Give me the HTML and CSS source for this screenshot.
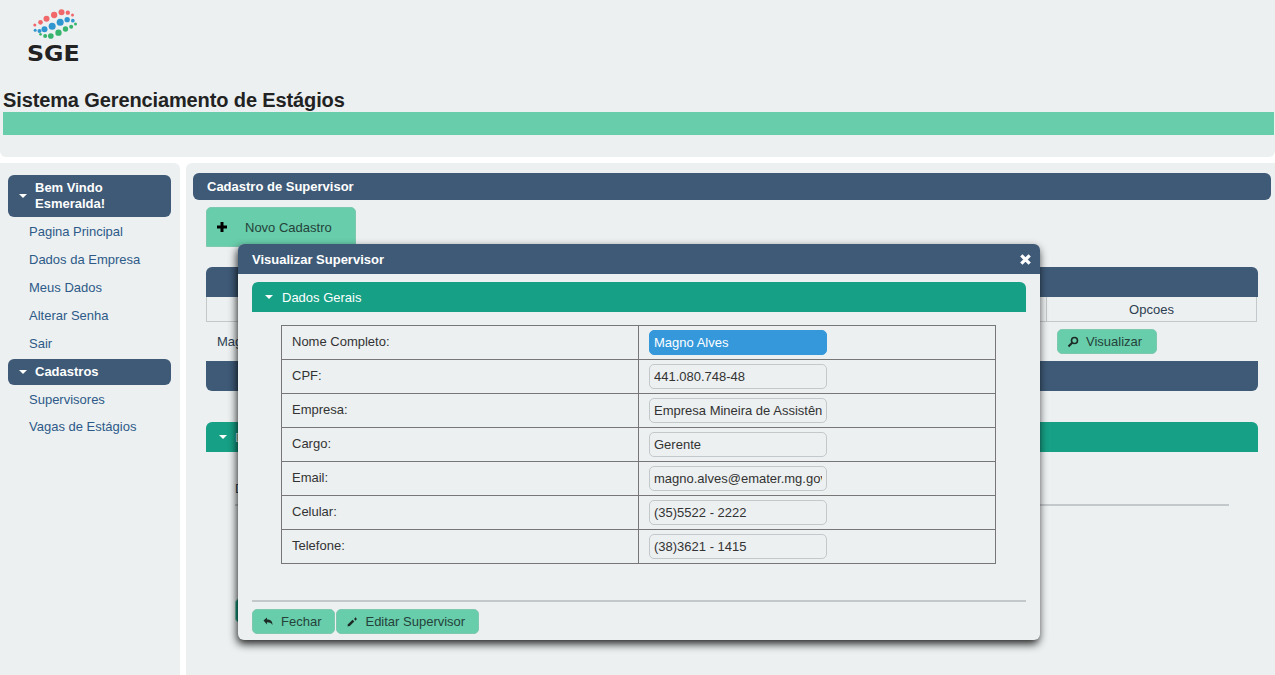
FILE: index.html
```html
<!DOCTYPE html>
<html lang="pt-BR">
<head>
  <meta charset="UTF-8">
  <title>Sistema Gerenciamento de Estágios</title>
  <link rel="stylesheet" href="styles.css">
</head>
<body>
  <header class="top">
    <div class="logo">
      <svg class="logo-dots" viewBox="45 25 140 90" width="47" height="30">
        <g fill="#f0686a">
          <circle cx="56" cy="73" r="4.500"/><circle cx="73" cy="65" r="7"/><circle cx="91" cy="54" r="9"/>
          <circle cx="114" cy="43" r="9.500"/><circle cx="136" cy="35" r="9"/><circle cx="155" cy="36" r="6.500"/><circle cx="169" cy="43" r="4.500"/>
        </g>
        <g fill="#2f96d0">
          <circle cx="57" cy="89" r="4.500"/><circle cx="70" cy="91" r="6"/><circle cx="85" cy="86" r="9"/>
          <circle cx="108" cy="77" r="10.500"/><circle cx="132" cy="65" r="10.500"/><circle cx="153" cy="57" r="8"/><circle cx="170" cy="60" r="5.500"/>
        </g>
        <g fill="#37b56c">
          <circle cx="73" cy="101" r="4"/><circle cx="87" cy="106" r="6"/><circle cx="104" cy="106" r="8.500"/>
          <circle cx="127" cy="96" r="9.500"/><circle cx="148" cy="85" r="8"/><circle cx="165" cy="78" r="6"/><circle cx="178" cy="70" r="4.500"/>
        </g>
      </svg>
      <div class="logo-text">SGE</div>
    </div>
    <h1 class="site-title">Sistema Gerenciamento de Estágios</h1>
    <div class="top-bar"></div>
  </header>

  <div class="main">
    <nav class="sidebar">
      <div class="menu-head">
        <svg class="tri" viewBox="0 0 8 4" width="8" height="4"><path d="M0 0h8L4 4z"/></svg>
        <span>Bem Vindo Esmeralda!</span>
      </div>
      <ul class="menu-list">
        <li>Pagina Principal</li>
        <li>Dados da Empresa</li>
        <li>Meus Dados</li>
        <li>Alterar Senha</li>
        <li>Sair</li>
      </ul>
      <div class="menu-head">
        <svg class="tri" viewBox="0 0 8 4" width="8" height="4"><path d="M0 0h8L4 4z"/></svg>
        <span>Cadastros</span>
      </div>
      <ul class="menu-list menu-tight">
        <li>Supervisores</li>
        <li>Vagas de Estágios</li>
      </ul>
    </nav>

    <section class="content">
      <div class="page-title">Cadastro de Supervisor</div>
      <div class="inner">
        <button class="btn btn-new">
          <svg viewBox="0 0 10 10" width="10" height="10"><path d="M3.500 0h3v3.500H10v3H6.500V10h-3V6.500H0v-3h3.500z"/></svg>
          <span>Novo Cadastro</span>
        </button>

        <div class="grid-head"></div>
        <div class="grid-cols"><div class="col-name"></div><div class="col-opts">Opcoes</div></div>
        <div class="grid-row">
          <span>Magno Alves</span>
          <button class="btn btn-view">
            <svg viewBox="0 0 12 12" width="12" height="12"><circle cx="7.500" cy="4.500" r="3" fill="none" stroke="#1d2b26" stroke-width="1.600"/><path d="M5.200 6.800L1.500 10.500" fill="none" stroke="#1d2b26" stroke-width="2"/></svg>
            <span>Visualizar</span>
          </button>
        </div>
        <div class="grid-foot"></div>

        <div class="green-head">
          <svg class="tri" viewBox="0 0 8 4" width="8" height="4"><path d="M0 0h8L4 4z"/></svg>
          <span>Dados</span>
        </div>
        <div class="green-body">
          <div class="green-label">Dados</div>
          <hr class="line">
          <button class="btn btn-hidden">Voltar</button>
        </div>
      </div>
    </section>
  </div>

  <div class="dialog">
    <div class="dialog-title">
      <span>Visualizar Supervisor</span>
      <svg viewBox="0 0 10 10" width="11" height="11"><path d="M1.200 1.200l7.600 7.600M8.800 1.200l-7.600 7.600" stroke="#fff" stroke-width="3"/></svg>
    </div>
    <div class="dialog-body">
      <div class="dialog-section">
        <svg class="tri" viewBox="0 0 8 4" width="8" height="4"><path d="M0 0h8L4 4z"/></svg>
        <span>Dados Gerais</span>
      </div>
      <table class="form-table">
        <tr><td>Nome Completo:</td><td><input class="field field-focus" value="Magno Alves"></td></tr>
        <tr><td>CPF:</td><td><input class="field" value="441.080.748-48"></td></tr>
        <tr><td>Empresa:</td><td><input class="field" value="Empresa Mineira de Assistência Técnica"></td></tr>
        <tr><td>Cargo:</td><td><input class="field" value="Gerente"></td></tr>
        <tr><td>Email:</td><td><input class="field" value="magno.alves@emater.mg.gov.br"></td></tr>
        <tr><td>Celular:</td><td><input class="field" value="(35)5522 - 2222"></td></tr>
        <tr><td>Telefone:</td><td><input class="field" value="(38)3621 - 1415"></td></tr>
      </table>
      <hr class="dialog-line">
      <div class="dialog-actions">
        <button class="btn btn-small">
          <svg viewBox="0 0 12 12" width="12" height="12"><path d="M1.500 4.500L5 1.500v2c3.500 0 5.500 1.700 5.500 5.500-1-2-3-2.700-5.500-2.700v2.200z" fill="#1d2b26"/></svg>
          <span>Fechar</span>
        </button>
        <button class="btn btn-small">
          <svg viewBox="0 0 12 12" width="12" height="12"><path d="M1.500 10.500l.5-2.300L6.500 3.800l1.800 1.800L3.800 10z" fill="#1d2b26"/><path d="M9 1.500h1v1h1v1h-1v1H9v-1H8v-1h1z" fill="#1d2b26"/></svg>
          <span>Editar Supervisor</span>
        </button>
      </div>
    </div>
  </div>
</body>
</html>
```

FILE: styles.css
```css
html, body {
  height: 100%;
}
body {
  margin: 0;
  background-color: #fff;
  font-family: "Liberation Sans", Arial, sans-serif;
  font-size: 13px;
  color: #2c3e50;
  display: flex;
  flex-direction: column;
  overflow: hidden;
}

/* Topo */
.top {
  height: 157px;
  flex: none;
  box-sizing: border-box;
  background-color: #ecf0f1;
  border-radius: 0 0 6px 6px;
  padding: 9px 1px 0 3px;
}
.logo {
  width: 56px;
  height: 70px;
  margin-left: 24px;
}
.logo-dots {
  display: block;
  margin-left: 4px;
}
.logo-text {
  font-family: "DejaVu Sans", sans-serif;
  font-weight: bold;
  font-size: 21px;
  line-height: 23px;
  color: #222;
  margin-top: 4px;
  transform: scaleX(1.13);
  transform-origin: left;
}
.site-title {
  margin: 10px 0 0;
  font-size: 20px;
  line-height: 23px;
  letter-spacing: -0.12px;
  color: #222;
}
.top-bar {
  height: 23px;
  background-color: #68cdaa;
}

.main {
  flex: 1;
  display: flex;
  gap: 6px;
  margin-top: 6px;
  min-height: 0;
}

/* Menu lateral */
.sidebar {
  width: 180px;
  flex: none;
  box-sizing: border-box;
  background-color: #ecf0f1;
  border-radius: 0 6px 0 0;
  padding: 12px 9px 0 8px;
}
.tri {
  fill: #fff;
  flex: none;
}
.menu-head {
  display: flex;
  align-items: center;
  gap: 8px;
  padding: 5px 8px 5px 11px;
  background-color: #3e5a77;
  border-radius: 6px;
  color: #fff;
  font-weight: bold;
  line-height: 16px;
}
.menu-list {
  list-style-type: none;
  margin: 0 0 2px;
  padding: 0 0 0 21px;
  color: #2d5a88;
}
.menu-list li {
  height: 28px;
  line-height: 30px;
}
.menu-tight li + li {
  margin-top: -1px;
}

/* Conteudo */
.content {
  flex: 1;
  box-sizing: border-box;
  background-color: #ecf0f1;
  border-radius: 6px 0 0 0;
  padding: 10px 4px 0 7px;
}
.page-title {
  height: 27px;
  line-height: 28px;
  padding-left: 14px;
  background-color: #3e5a77;
  border-radius: 6px;
  color: #fff;
  font-weight: bold;
}
.inner {
  padding: 7px 13px 0;
}
.btn {
  display: flex;
  align-items: center;
  font-family: inherit;
  font-size: 13px;
  color: #24423a;
  background-color: #68cdaa;
  border: 1px solid #7cc9b0;
  border-radius: 5px;
  padding: 0;
}
.btn-new {
  width: 150px;
  height: 40px;
  padding-left: 10px;
  gap: 18px;
  border-radius: 5px 5px 0 0;
}
.grid-head {
  height: 30px;
  margin-top: 20px;
  background-color: #3e5a77;
  border-radius: 6px 6px 0 0;
}
.grid-cols {
  display: flex;
  height: 24px;
  border: 1px solid #c3c8ca;
  border-top: none;
  margin-right: 1px;
}
.col-name {
  flex: 1;
  border-right: 1px solid #c3c8ca;
}
.col-opts {
  width: 209px;
  text-align: center;
  line-height: 26px;
}
.grid-row {
  display: flex;
  align-items: center;
  justify-content: space-between;
  height: 39px;
  padding: 0 101px 0 11px;
}
.btn-view {
  width: 100px;
  height: 25px;
  padding-left: 9px;
  gap: 7px;
}
.grid-foot {
  height: 30px;
  background-color: #3e5a77;
  border-radius: 0 0 6px 6px;
}
.green-head {
  display: flex;
  align-items: center;
  gap: 8px;
  height: 30px;
  margin-top: 31px;
  padding-left: 13px;
  background-color: #16a085;
  border-radius: 6px 6px 0 0;
  color: #fff;
}
.green-body {
  padding: 29px 29px 0;
}
.green-label {
  line-height: 16px;
}
.line {
  height: 2px;
  margin: 7px 0 0;
  border: none;
  background-color: #c3c8ca;
}
.btn-hidden {
  width: 90px;
  height: 25px;
  margin-top: 92px;
  padding-left: 10px;
  background-color: #16a085;
}

/* Janela de visualizacao */
.dialog {
  position: absolute;
  left: 238px;
  top: 244px;
  width: 802px;
  height: 396px;
  background-color: #ecf0f1;
  border-radius: 6px;
  box-shadow: -1px 4px 8px rgba(0, 0, 0, 0.85);
}
.dialog-title {
  display: flex;
  align-items: center;
  justify-content: space-between;
  height: 30px;
  padding: 0 9px 0 14px;
  background-color: #3e5a77;
  border-radius: 6px 6px 0 0;
  color: #fff;
  font-weight: bold;
}
.dialog-body {
  padding: 8px 14px 0;
}
.dialog-section {
  display: flex;
  align-items: center;
  gap: 9px;
  height: 30px;
  padding-left: 13px;
  background-color: #16a085;
  border-radius: 6px 6px 0 0;
  color: #fff;
}
.form-table {
  width: 715px;
  margin: 13px 0 0 29px;
  border-collapse: collapse;
  table-layout: fixed;
  color: #333;
}
.form-table td {
  height: 33px;
  padding: 0 10px;
  border: 1px solid #777;
}
.form-table td:first-child {
  vertical-align: top;
  line-height: 32px;
}
.field {
  display: block;
  box-sizing: border-box;
  width: 178px;
  height: 25px;
  padding: 0 4px;
  font-family: inherit;
  font-size: 13px;
  color: #333;
  background-color: #ecf0f1;
  border: 1px solid #c3c8ca;
  border-radius: 5px;
}
.field-focus {
  background-color: #3498db;
  border-color: #3498db;
  color: #fff;
}
.dialog-line {
  height: 2px;
  margin: 36px 0 0;
  border: none;
  background-color: #c3c8ca;
}
.dialog-actions {
  display: flex;
  gap: 1px;
  margin-top: 7px;
}
.btn-small {
  height: 25px;
  padding: 0 13px 0 9px;
  gap: 7px;
}
```
